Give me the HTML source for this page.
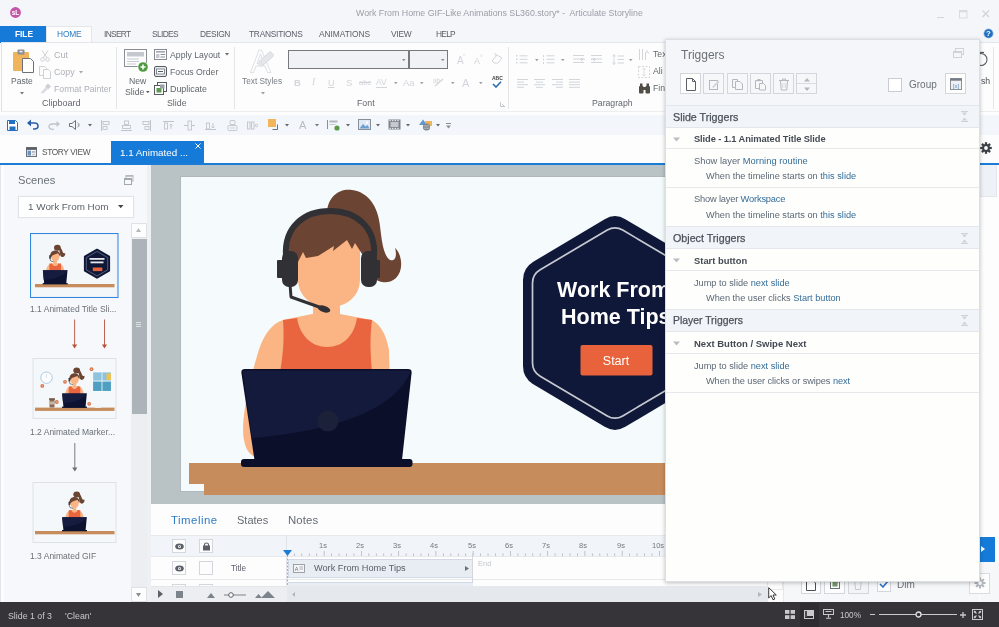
<!DOCTYPE html>
<html><head><meta charset="utf-8">
<style>
*{box-sizing:border-box;margin:0;padding:0}
html,body{width:999px;height:627px;overflow:hidden;background:#fdfdfd;font-family:"Liberation Sans",sans-serif;font-size:10px;color:#555}
.a{position:absolute}
svg{will-change:transform}
.t{position:absolute;white-space:nowrap;line-height:1;will-change:transform}
#titlebar{left:0;top:0;width:999px;height:43px;background:#f4f6fa}
#ribbon{left:1px;top:42px;width:998px;height:70px;background:#fdfdfd;border-top:1px solid #e3e6ea;border-left:1px solid #dfe2e6;border-bottom:1px solid #eceef0}
#qat{left:0;top:115px;width:999px;height:20px;background:#f3f6fb}
#tabrow{left:0;top:137px;width:999px;height:27px;background:#fdfdfd}
#blueline{left:0;top:163px;width:999px;height:1.5px;background:#1b7cd6}
#left{left:0;top:164.5px;width:151px;height:438px;background:#f6f8fb}
#stage{left:151px;top:164.5px;width:848px;height:340px;background:#b9c2c4}
#timeline{left:151px;top:504px;width:848px;height:99px;background:#fdfdfd}
#status{left:0;top:602px;width:999px;height:25px;background:#363439}
#rightstrip{left:979px;top:113px;width:20px;height:490px;background:#fdfdfd}
#trig{left:665px;top:39px;width:315px;height:542.5px;background:#fefefd;border:1px solid #dcdfe3;box-shadow:0 1px 4px rgba(0,0,0,.25)}
.hdr{position:absolute;left:0;width:313px;height:23px;background:#f1f4f9;border-top:1px solid #e3e6ea;border-bottom:1px solid #e3e6ea}
.hl{position:absolute;left:0;width:313px;height:1px;background:#e6e8eb}
.tx{color:#5c6875}
.lk{color:#336d99}
.bd{font-weight:bold;color:#444a52}
.tb{width:21px;height:21px;border:1px solid #d3d6da}
.rb{color:#62676e}
.rd{color:#adb1b7}
.lb{color:#62676e}
</style></head><body>
<div class="a" id="titlebar">
<svg class="a" style="left:9.5px;top:7px" width="11" height="11" viewBox="0 0 11 11"><circle cx="5.5" cy="5.5" r="5.4" fill="#c455a8"/><text x="5.5" y="8" font-size="6.5" font-weight="bold" fill="#fff" text-anchor="middle" font-family="Liberation Sans">sL</text></svg>
<div class="t " style="left:356px;top:9.3px;font-size:8.8px;color:#999ea5;">Work From Home GIF-Like Animations SL360.story* -&nbsp; Articulate Storyline</div>
<div class="a" style="left:0px;top:26px;width:46px;height:17px;background:#167bd8;"></div>
<div class="t " style="left:15px;top:30.3px;font-size:8.4px;color:#fff;letter-spacing:-0.039px;font-weight:700;">FILE</div>
<div class="a" style="left:46px;top:26px;width:46px;height:18px;background:#fdfdfd;border:1px solid #e3e6ea;border-bottom:none"></div>
<div class="t " style="left:57px;top:30.3px;font-size:8.4px;color:#2d7cc4;letter-spacing:-0.156px;">HOME</div>
<div class="t " style="left:103.5px;top:30.3px;font-size:8.4px;color:#5c6168;letter-spacing:-0.677px;">INSERT</div>
<div class="t " style="left:151.5px;top:30.3px;font-size:8.4px;color:#5c6168;letter-spacing:-0.633px;">SLIDES</div>
<div class="t " style="left:200px;top:30.3px;font-size:8.4px;color:#5c6168;letter-spacing:-0.354px;">DESIGN</div>
<div class="t " style="left:248.5px;top:30.3px;font-size:8.4px;color:#5c6168;letter-spacing:-0.256px;">TRANSITIONS</div>
<div class="t " style="left:318.5px;top:30.3px;font-size:8.4px;color:#5c6168;letter-spacing:-0.050px;">ANIMATIONS</div>
<div class="t " style="left:390.5px;top:30.3px;font-size:8.4px;color:#5c6168;letter-spacing:-0.227px;">VIEW</div>
<div class="t " style="left:436px;top:30.3px;font-size:8.4px;color:#5c6168;letter-spacing:-0.723px;">HELP</div>
<div class="a" style="left:937px;top:16.5px;width:7px;height:1px;background:#d3d6da;"></div>
<svg class="a" style="left:959px;top:9.5px" width="9" height="9" viewBox="0 0 9 9"><rect x=".5" y=".5" width="7.5" height="7.5" fill="none" stroke="#d8dbdf"/><rect x=".5" y=".5" width="7.5" height="1.8" fill="#d8dbdf"/></svg>
<svg class="a" style="left:982px;top:10px" width="8" height="8" viewBox="0 0 8 8"><path d="M.5 .5L7 7M7 .5L.5 7" stroke="#d0d3d7" stroke-width="1.1"/></svg>
<svg class="a" style="left:983px;top:28px" width="11" height="11" viewBox="0 0 11 11"><circle cx="5.5" cy="5.5" r="5.1" fill="#a9c6e6"/><circle cx="5.5" cy="5.5" r="4.3" fill="#1f6fc2"/><text x="5.5" y="8.3" font-size="7.8" font-weight="bold" fill="#fff" text-anchor="middle" font-family="Liberation Sans">?</text></svg>
</div>
<div class="a" id="ribbon"></div>
<svg class="a" style="left:12px;top:49px" width="23" height="24" viewBox="0 0 23 24"><rect x="1" y="3" width="16" height="19" rx="1" fill="#f0b45c"/><rect x="5.5" y="0.5" width="7" height="5" rx="1" fill="#8a8f96"/><rect x="7.5" y="1.8" width="3" height="1.6" fill="#f0f3f7"/><path d="M10.5 9.5H18.5L21.5 12.5V23.5H10.5Z" fill="#fff" stroke="#6b7179"/></svg>
<div class="t rb" style="left:10.8px;top:77.0px;font-size:8.5px;">Paste</div>
<svg class="a" style="left:20.0px;top:91.75px" width="4" height="2.5" viewBox="0 0 4 2.5"><path d="M0 0H4L2.0 2.5Z" fill="#777"/></svg>
<svg class="a" style="left:40px;top:49.5px" width="10" height="12" viewBox="0 0 10 12"><path d="M2 .5L7 8M8 .5L3 8" stroke="#cdd0d5" fill="none"/><circle cx="2.5" cy="9.5" r="1.8" fill="none" stroke="#cdd0d5"/><circle cx="7.5" cy="9.5" r="1.8" fill="none" stroke="#cdd0d5"/></svg>
<div class="t rd" style="left:54px;top:51.0px;font-size:9px;">Cut</div>
<svg class="a" style="left:39px;top:66px" width="12" height="13" viewBox="0 0 12 13"><path d="M.5 .5H5.5L7.5 2.5V9.5H.5Z" fill="#fdfdfd" stroke="#cdd0d5"/><path d="M4.5 3.5H9.5L11.5 5.5V12.5H4.5Z" fill="#fdfdfd" stroke="#cdd0d5"/></svg>
<div class="t rd" style="left:54px;top:68.4px;font-size:8.8px;">Copy</div>
<svg class="a" style="left:78.8px;top:71.05px" width="4" height="2.5" viewBox="0 0 4 2.5"><path d="M0 0H4L2.0 2.5Z" fill="#a3a8ae"/></svg>
<svg class="a" style="left:40px;top:83px" width="12" height="11" viewBox="0 0 12 11"><path d="M8 .5L11 3.5L8 6.5L5 3.5Z" fill="#cdd0d5"/><path d="M5.5 4.5L7.5 6.5L3 10.5L.5 10Z" fill="#d8dbdf"/></svg>
<div class="t rd" style="left:54px;top:84.7px;font-size:8.7px;">Format Painter</div>
<div class="t lb" style="left:41.5px;top:99.0px;font-size:9px;">Clipboard</div>
<div class="a" style="left:116px;top:47px;width:1px;height:62px;background:#e4e6ea;"></div>
<svg class="a" style="left:124px;top:48.5px" width="25" height="24" viewBox="0 0 25 24"><rect x=".5" y=".5" width="22" height="17" fill="#fdfdfd" stroke="#8a8f96"/><rect x="3" y="3" width="17" height="4.5" fill="#c5c9cf"/><rect x="3" y="9.5" width="12" height="1" fill="#c5c9cf"/><rect x="3" y="12" width="12" height="1" fill="#c5c9cf"/><rect x="3" y="14.5" width="9" height="1" fill="#c5c9cf"/><circle cx="19" cy="18" r="5.5" fill="#fdfdfd"/><circle cx="19" cy="18" r="4.8" fill="#4e9a3f"/><path d="M16.5 18H21.5M19 15.5V20.5" stroke="#fff" stroke-width="1.5"/></svg>
<div class="t rb" style="left:128.5px;top:76.8px;font-size:8.7px;">New</div>
<div class="t rb" style="left:125px;top:87.7px;font-size:8.7px;">Slide</div>
<svg class="a" style="left:145.7px;top:91.4px" width="3.6" height="2.2" viewBox="0 0 3.6 2.2"><path d="M0 0H3.6L1.8 2.2Z" fill="#555"/></svg>
<svg class="a" style="left:154px;top:48.5px" width="13" height="11" viewBox="0 0 13 11"><rect x=".5" y=".5" width="12" height="10" fill="#fdfdfd" stroke="#868b92"/><rect x="2" y="2" width="9" height="1.6" fill="#a3a8ae"/><rect x="2" y="5" width="3.5" height="4" fill="#c5c9cf"/><rect x="6.5" y="5" width="4.5" height="1" fill="#8a8f96"/><rect x="6.5" y="7.5" width="4.5" height="1" fill="#8a8f96"/></svg>
<div class="t rb" style="left:169.5px;top:50.6px;font-size:8.7px;">Apply Layout</div>
<svg class="a" style="left:225.2px;top:53.25px" width="4" height="2.5" viewBox="0 0 4 2.5"><path d="M0 0H4L2.0 2.5Z" fill="#666"/></svg>
<svg class="a" style="left:154px;top:66px" width="13" height="11" viewBox="0 0 13 11"><rect x=".5" y=".5" width="12" height="10" rx="1.5" fill="#e9ebee" stroke="#555b63"/><rect x="2.5" y="3" width="8" height="5" fill="#fdfdfd" stroke="#6b7179" stroke-width=".8"/><rect x="4" y="5" width="5" height="1" fill="#555b63"/></svg>
<div class="t rb" style="left:169.5px;top:68.2px;font-size:8.7px;">Focus Order</div>
<svg class="a" style="left:153.5px;top:82px" width="14" height="13" viewBox="0 0 14 13"><rect x="3.5" y=".5" width="9" height="9" fill="#fdfdfd" stroke="#555b63"/><rect x=".5" y="3.5" width="9" height="9" fill="#fdfdfd" stroke="#555b63"/><rect x="2.5" y="6" width="5" height="4.5" fill="#5d9a4c"/><rect x="6" y="2.5" width="4.5" height="4" fill="#9aa0a7"/></svg>
<div class="t rb" style="left:169.5px;top:84.5px;font-size:8.9px;">Duplicate</div>
<div class="t lb" style="left:167.2px;top:99.1px;font-size:8.8px;">Slide</div>
<div class="a" style="left:233.5px;top:47px;width:1px;height:62px;background:#e4e6ea;"></div>
<svg class="a" style="left:249px;top:49px" width="26" height="25" viewBox="0 0 26 25"><path d="M1.5 23.5L10 1H12.5L22 23.5H18.5L16 17H7L4.5 23.5Z" fill="#fdfdfd" stroke="#d9dce0" stroke-width=".9"/><path d="M8 14.5H15L11.5 5Z" fill="#fdfdfd" stroke="#d9dce0" stroke-width=".9"/><g transform="rotate(-41 18 9)"><rect x="10" y="6.2" width="15" height="5.6" rx="1.5" fill="#e4e6ea" stroke="#d3d6da" stroke-width=".8"/><path d="M10 6.2L7 9L10 11.8Z" fill="#eceef0" stroke="#d3d6da" stroke-width=".6"/></g></svg>
<div class="t " style="left:241.5px;top:77.1px;font-size:8.3px;color:#7a7f86;">Text Styles</div>
<svg class="a" style="left:260.5px;top:91.75px" width="4" height="2.5" viewBox="0 0 4 2.5"><path d="M0 0H4L2.0 2.5Z" fill="#9a9fa6"/></svg>
<div class="a" style="left:288px;top:50px;width:121px;height:19px;background:#f1f2f5;border:1px solid #77797d"></div>
<div class="a" style="left:408.5px;top:50px;width:39px;height:19px;background:#f1f2f5;border:1px solid #77797d"></div>
<svg class="a" style="left:401.7px;top:58.9px" width="3.6" height="2.2" viewBox="0 0 3.6 2.2"><path d="M0 0H3.6L1.8 2.2Z" fill="#8a8f96"/></svg>
<svg class="a" style="left:440.5px;top:58.9px" width="3.6" height="2.2" viewBox="0 0 3.6 2.2"><path d="M0 0H3.6L1.8 2.2Z" fill="#8a8f96"/></svg>
<div class="t " style="left:457px;top:56.0px;font-size:10px;color:#d2d5da;">A</div>
<div class="t " style="left:463px;top:54.0px;font-size:5px;color:#d2d5da;">^</div>
<div class="t " style="left:473.5px;top:57.0px;font-size:9px;color:#d2d5da;">A</div>
<div class="t " style="left:479.5px;top:54.0px;font-size:5px;color:#d2d5da;">˅</div>
<svg class="a" style="left:491px;top:53px" width="12" height="11" viewBox="0 0 12 11"><path d="M1 8L6 2L11 5L7 10H3Z" fill="none" stroke="#d2d5da"/><path d="M3 1C5 0 6 2 4 3" stroke="#d2d5da" fill="none"/></svg>
<div class="t " style="left:293.5px;top:78.3px;font-size:9.5px;color:#d2d5da;font-weight:bold">B</div>
<div class="t " style="left:312px;top:78.3px;font-size:9.5px;color:#d2d5da;font-style:italic;font-family:'Liberation Serif'">I</div>
<div class="t " style="left:327.5px;top:78.6px;font-size:9px;color:#d2d5da;text-decoration:underline">U</div>
<div class="t " style="left:345.5px;top:78.3px;font-size:9.5px;color:#d2d5da;">S</div>
<div class="t " style="left:358.5px;top:79.3px;font-size:7.5px;color:#d2d5da;text-decoration:line-through">abc</div>
<div class="t " style="left:376px;top:77.8px;font-size:8.5px;color:#d2d5da;">AV</div>
<div class="a" style="left:376px;top:86.5px;width:11px;height:1px;background:#d2d5da;"></div>
<svg class="a" style="left:393.9px;top:81.5px" width="3.6" height="2.2" viewBox="0 0 3.6 2.2"><path d="M0 0H3.6L1.8 2.2Z" fill="#9a9fa6"/></svg>
<div class="t " style="left:402.5px;top:78.3px;font-size:9.5px;color:#d2d5da;">Aa</div>
<svg class="a" style="left:420.4px;top:81.5px" width="3.6" height="2.2" viewBox="0 0 3.6 2.2"><path d="M0 0H3.6L1.8 2.2Z" fill="#9a9fa6"/></svg>
<div class="t " style="left:433px;top:77.8px;font-size:6.5px;color:#d2d5da;">ab</div>
<svg class="a" style="left:434px;top:78px" width="10" height="9" viewBox="0 0 10 9"><path d="M1 8L9 1" stroke="#d2d5da" stroke-width="1.3"/></svg>
<svg class="a" style="left:450.9px;top:81.5px" width="3.6" height="2.2" viewBox="0 0 3.6 2.2"><path d="M0 0H3.6L1.8 2.2Z" fill="#9a9fa6"/></svg>
<div class="t " style="left:462px;top:77.6px;font-size:11px;color:#d2d5da;">A</div>
<svg class="a" style="left:478.5px;top:81.5px" width="3.6" height="2.2" viewBox="0 0 3.6 2.2"><path d="M0 0H3.6L1.8 2.2Z" fill="#9a9fa6"/></svg>
<div class="t " style="left:492px;top:76.3px;font-size:5px;color:#444;font-weight:bold">ABC</div>
<svg class="a" style="left:492px;top:81px" width="10" height="7" viewBox="0 0 10 7"><path d="M1 3L4 6L9 .8" fill="none" stroke="#2b6cb0" stroke-width="1.6"/></svg>
<div class="t lb" style="left:357.3px;top:99.1px;font-size:8.8px;">Font</div>
<svg class="a" style="left:499.5px;top:102px" width="5" height="5" viewBox="0 0 5 5"><path d="M.5 0V4.5H5M2 2L4.5 4.5" fill="none" stroke="#b8bcc2" stroke-width=".8"/></svg>
<div class="a" style="left:508px;top:47px;width:1px;height:62px;background:#e4e6ea;"></div>
<svg class="a" style="left:516px;top:54.5px" width="12" height="9" viewBox="0 0 12 9"><rect x="0" y="0.0" width="1.5" height="1.5" fill="#d2d5da"/><rect x="3.5" y="0.3" width="8" height="1" fill="#d2d5da"/><rect x="0" y="3.5" width="1.5" height="1.5" fill="#d2d5da"/><rect x="3.5" y="3.8" width="8" height="1" fill="#d2d5da"/><rect x="0" y="7.0" width="1.5" height="1.5" fill="#d2d5da"/><rect x="3.5" y="7.3" width="8" height="1" fill="#d2d5da"/></svg>
<svg class="a" style="left:534.5px;top:58.9px" width="3.6" height="2.2" viewBox="0 0 3.6 2.2"><path d="M0 0H3.6L1.8 2.2Z" fill="#9a9fa6"/></svg>
<svg class="a" style="left:543px;top:54.5px" width="12" height="9" viewBox="0 0 12 9"><rect x="0" y="0.0" width="1" height="2" fill="#d2d5da"/><rect x="3.5" y="0.3" width="8" height="1" fill="#d2d5da"/><rect x="0" y="3.5" width="1" height="2" fill="#d2d5da"/><rect x="3.5" y="3.8" width="8" height="1" fill="#d2d5da"/><rect x="0" y="7.0" width="1" height="2" fill="#d2d5da"/><rect x="3.5" y="7.3" width="8" height="1" fill="#d2d5da"/></svg>
<svg class="a" style="left:560.8000000000001px;top:58.9px" width="3.6" height="2.2" viewBox="0 0 3.6 2.2"><path d="M0 0H3.6L1.8 2.2Z" fill="#9a9fa6"/></svg>
<svg class="a" style="left:573px;top:55px" width="11" height="10.5" viewBox="0 0 11 10.5"><rect x="0" y="0.0" width="11" height="1" fill="#d2d5da"/><rect x="0" y="3.5" width="11" height="1" fill="#d2d5da"/><rect x="0" y="7.0" width="11" height="1" fill="#d2d5da"/></svg>
<svg class="a" style="left:580px;top:56.5px" width="5" height="5" viewBox="0 0 5 5"><path d="M5 2.5H1M2.5 .5L.5 2.5L2.5 4.5" stroke="#d2d5da" fill="none"/></svg>
<svg class="a" style="left:591px;top:55px" width="11" height="10.5" viewBox="0 0 11 10.5"><rect x="0" y="0.0" width="11" height="1" fill="#d2d5da"/><rect x="0" y="3.5" width="11" height="1" fill="#d2d5da"/><rect x="0" y="7.0" width="11" height="1" fill="#d2d5da"/></svg>
<svg class="a" style="left:591px;top:56.5px" width="5" height="5" viewBox="0 0 5 5"><path d="M0 2.5H4M2.5 .5L4.5 2.5L2.5 4.5" stroke="#d2d5da" fill="none"/></svg>
<svg class="a" style="left:612px;top:53.5px" width="12" height="11" viewBox="0 0 12 11"><path d="M2 .5V10.5M.5 2.5L2 .5L3.5 2.5M.5 8.5L2 10.5L3.5 8.5" stroke="#d2d5da" fill="none" stroke-width=".9"/><rect x="5.5" y="1.5" width="6.5" height="1" fill="#d2d5da"/><rect x="5.5" y="5.0" width="6.5" height="1" fill="#d2d5da"/><rect x="5.5" y="8.5" width="6.5" height="1" fill="#d2d5da"/></svg>
<svg class="a" style="left:629.2px;top:58.9px" width="3.6" height="2.2" viewBox="0 0 3.6 2.2"><path d="M0 0H3.6L1.8 2.2Z" fill="#9a9fa6"/></svg>
<svg class="a" style="left:517px;top:79px" width="11" height="10" viewBox="0 0 11 10"><rect x="0" y="0.0" width="11" height="1" fill="#d2d5da"/><rect x="0" y="2.6" width="7" height="1" fill="#d2d5da"/><rect x="0" y="5.2" width="11" height="1" fill="#d2d5da"/><rect x="0" y="7.800000000000001" width="7" height="1" fill="#d2d5da"/></svg>
<svg class="a" style="left:534px;top:79px" width="11" height="10" viewBox="0 0 11 10"><rect x="0.0" y="0.0" width="11" height="1" fill="#d2d5da"/><rect x="2.0" y="2.6" width="7" height="1" fill="#d2d5da"/><rect x="0.0" y="5.2" width="11" height="1" fill="#d2d5da"/><rect x="2.0" y="7.800000000000001" width="7" height="1" fill="#d2d5da"/></svg>
<svg class="a" style="left:551.5px;top:79px" width="11" height="10" viewBox="0 0 11 10"><rect x="0" y="0.0" width="11" height="1" fill="#d2d5da"/><rect x="4" y="2.6" width="7" height="1" fill="#d2d5da"/><rect x="0" y="5.2" width="11" height="1" fill="#d2d5da"/><rect x="4" y="7.800000000000001" width="7" height="1" fill="#d2d5da"/></svg>
<svg class="a" style="left:568.5px;top:79px" width="11" height="10" viewBox="0 0 11 10"><rect x="0" y="0.0" width="11" height="1" fill="#d2d5da"/><rect x="0" y="2.6" width="11" height="1" fill="#d2d5da"/><rect x="0" y="5.2" width="11" height="1" fill="#d2d5da"/><rect x="0" y="7.800000000000001" width="11" height="1" fill="#d2d5da"/></svg>
<div class="t lb" style="left:592px;top:99.2px;font-size:8.7px;">Paragraph</div>
<svg class="a" style="left:638px;top:48.5px" width="12" height="12" viewBox="0 0 12 12"><path d="M1.5 0V11M4.5 0V11M7.5 3V11" stroke="#d2d5da"/><text x="7" y="5" font-size="6" fill="#d2d5da" font-family="Liberation Sans">A</text></svg>
<div class="t rb" style="left:652.8px;top:50.2px;font-size:8.7px;">Tex</div>
<svg class="a" style="left:638px;top:65.5px" width="12" height="12" viewBox="0 0 12 12"><rect x=".5" y=".5" width="11" height="11" fill="none" stroke="#d2d5da" stroke-dasharray="2 1.5"/><path d="M6 2V10M4.5 3.5L6 2L7.5 3.5M4.5 8.5L6 10L7.5 8.5" stroke="#d2d5da" fill="none" stroke-width=".8"/></svg>
<div class="t rb" style="left:652.8px;top:67.4px;font-size:8.7px;">Ali</div>
<svg class="a" style="left:638px;top:82.5px" width="13" height="11" viewBox="0 0 13 11"><rect x="1" y="3" width="4.5" height="7.5" rx="1" fill="#504e46"/><rect x="7.5" y="3" width="4.5" height="7.5" rx="1" fill="#504e46"/><rect x="2" y=".5" width="2.5" height="3" fill="#504e46"/><rect x="8.5" y=".5" width="2.5" height="3" fill="#504e46"/><rect x="5" y="4" width="3" height="3" fill="#504e46"/></svg>
<div class="t rb" style="left:652.8px;top:84.2px;font-size:8.7px;">Fin</div>
<div class="a" id="qat"></div>
<svg class="a" style="left:6.5px;top:119.5px" width="11" height="11" viewBox="0 0 11 11"><path d="M.5 .5H8.5L10.5 2.5V10.5H.5Z" fill="#fff" stroke="#2470c0"/><rect x="2" y=".5" width="6" height="3.5" fill="#2470c0"/><rect x="2.5" y="6.5" width="6" height="4" fill="#2470c0"/></svg>
<svg class="a" style="left:27px;top:119px" width="12" height="11" viewBox="0 0 12 11"><path d="M2 4H7.5C10 4 11 5.5 11 7C11 8.8 9.5 10 7.5 10H6" fill="none" stroke="#2b5ea8" stroke-width="1.6"/><path d="M0 4L4 .5V7.5Z" fill="#2b5ea8"/></svg>
<svg class="a" style="left:48px;top:119.5px" width="12" height="10" viewBox="0 0 12 10"><path d="M10 4H4.5C2 4 1 5.2 1 6.6C1 8.2 2.5 9.3 4.5 9.3H6" fill="none" stroke="#c0c5cb" stroke-width="1.3"/><path d="M12 4L8.5 1V7Z" fill="#c0c5cb"/></svg>
<svg class="a" style="left:69px;top:120px" width="12" height="10" viewBox="0 0 12 10"><path d="M.5 3.5H3L6.5 .5V9.5L3 6.5H.5Z" fill="none" stroke="#6b7179"/><path d="M8.5 2.5C9.8 4 9.8 6 8.5 7.5M10 3.5V6.5" fill="none" stroke="#9a9fa6" stroke-width=".9"/></svg>
<svg class="a" style="left:87.6px;top:123.75px" width="4" height="2.5" viewBox="0 0 4 2.5"><path d="M0 0H4L2.0 2.5Z" fill="#666"/></svg>
<svg class="a" style="left:99.5px;top:119.5px" width="11" height="11" viewBox="0 0 11 11"><path d="M1.5 0V11" stroke="#c0c5cb"/><rect x="3" y="1.5" width="6" height="3" fill="none" stroke="#c0c5cb" stroke-width=".9"/><rect x="3" y="6.5" width="4" height="3" fill="none" stroke="#c0c5cb" stroke-width=".9"/></svg>
<svg class="a" style="left:120.5px;top:119.5px" width="11" height="11" viewBox="0 0 11 11"><path d="M0 10.5H11" stroke="#c0c5cb"/><rect x="3.5" y="1" width="4" height="3.5" fill="none" stroke="#c0c5cb" stroke-width=".9"/><rect x="1.5" y="5.5" width="8" height="3" fill="none" stroke="#c0c5cb" stroke-width=".9"/></svg>
<svg class="a" style="left:141.0px;top:119.5px" width="11" height="11" viewBox="0 0 11 11"><path d="M9.5 0V11" stroke="#c0c5cb"/><rect x="2" y="1.5" width="6" height="3" fill="none" stroke="#c0c5cb" stroke-width=".9"/><rect x="4" y="6.5" width="4" height="3" fill="none" stroke="#c0c5cb" stroke-width=".9"/></svg>
<svg class="a" style="left:162.5px;top:119.5px" width="11" height="11" viewBox="0 0 11 11"><path d="M0 1.5H11" stroke="#c0c5cb"/><rect x="1.5" y="3" width="3" height="6" fill="none" stroke="#c0c5cb" stroke-width=".9"/><path d="M8 9V4M6.5 5.5L8 4L9.5 5.5" fill="none" stroke="#c0c5cb" stroke-width=".9"/></svg>
<svg class="a" style="left:184.0px;top:119.5px" width="11" height="11" viewBox="0 0 11 11"><path d="M0 5.5H11" stroke="#c0c5cb"/><rect x="4" y="1" width="3.5" height="9" fill="#f2f4f9" stroke="#c0c5cb" stroke-width=".9"/></svg>
<svg class="a" style="left:204.5px;top:119.5px" width="11" height="11" viewBox="0 0 11 11"><path d="M0 9.5H11" stroke="#c0c5cb"/><rect x="1.5" y="3" width="3" height="6" fill="none" stroke="#c0c5cb" stroke-width=".9"/><path d="M8 3V8M6.5 6.5L8 8L9.5 6.5" fill="none" stroke="#c0c5cb" stroke-width=".9"/></svg>
<svg class="a" style="left:226.5px;top:119.5px" width="11" height="11" viewBox="0 0 11 11"><rect x="3" y=".5" width="5" height="4" rx="1" fill="none" stroke="#c0c5cb" stroke-width=".9"/><rect x="1" y="5.5" width="9" height="5" rx="1" fill="none" stroke="#c0c5cb" stroke-width=".9"/><path d="M3 8H8" stroke="#c0c5cb" stroke-width=".8"/></svg>
<svg class="a" style="left:246.5px;top:119.5px" width="11" height="11" viewBox="0 0 11 11"><rect x=".5" y="2" width="2.5" height="7" fill="none" stroke="#c0c5cb" stroke-width=".9"/><rect x="4.5" y="2" width="2.5" height="7" fill="none" stroke="#c0c5cb" stroke-width=".9"/><circle cx="9.5" cy="5.5" r="1.3" fill="none" stroke="#c0c5cb" stroke-width=".9"/></svg>
<svg class="a" style="left:267.5px;top:119px" width="12" height="12" viewBox="0 0 12 12"><rect x="0" y="0" width="8" height="8" fill="#f4b45a"/><path d="M9.5 5.5V10.5H4.5" fill="none" stroke="#6b7179" stroke-width="1"/></svg>
<svg class="a" style="left:285.3px;top:123.75px" width="4" height="2.5" viewBox="0 0 4 2.5"><path d="M0 0H4L2.0 2.5Z" fill="#666"/></svg>
<div class="t " style="left:299px;top:120.0px;font-size:11px;color:#b8bcc2;">A</div>
<svg class="a" style="left:315.3px;top:123.75px" width="4" height="2.5" viewBox="0 0 4 2.5"><path d="M0 0H4L2.0 2.5Z" fill="#777"/></svg>
<svg class="a" style="left:327px;top:119.5px" width="13" height="11" viewBox="0 0 13 11"><path d="M.5 0V9" stroke="#8a8f96"/><rect x="2.5" y=".5" width="8" height="2" fill="#b3b8be"/><rect x="2.5" y="4" width="6" height="1" fill="#c5c9cf"/><circle cx="10" cy="8" r="2.6" fill="#5a9a48"/></svg>
<svg class="a" style="left:345.6px;top:123.75px" width="4" height="2.5" viewBox="0 0 4 2.5"><path d="M0 0H4L2.0 2.5Z" fill="#666"/></svg>
<svg class="a" style="left:357.5px;top:118.5px" width="13" height="12" viewBox="0 0 13 12"><rect x=".5" y=".5" width="12" height="10" fill="#dfe9f5" stroke="#8a8f96"/><path d="M1.5 9.5L5 5L7.5 7.5L9.5 6L11.5 9.5Z" fill="#6b9ed2"/><circle cx="9" cy="3.5" r="1.2" fill="#fff"/></svg>
<svg class="a" style="left:376.1px;top:123.75px" width="4" height="2.5" viewBox="0 0 4 2.5"><path d="M0 0H4L2.0 2.5Z" fill="#666"/></svg>
<svg class="a" style="left:387.5px;top:119px" width="13" height="11" viewBox="0 0 13 11"><rect x=".5" y=".5" width="12" height="10" fill="#7d838b"/><rect x="2.5" y="3" width="8" height="5" fill="#c5c9cf"/><rect x="1.5" y="1" width="1.4" height="1.2" fill="#e9ebee"/><rect x="1.5" y="8.8" width="1.4" height="1.2" fill="#e9ebee"/><rect x="4.1" y="1" width="1.4" height="1.2" fill="#e9ebee"/><rect x="4.1" y="8.8" width="1.4" height="1.2" fill="#e9ebee"/><rect x="6.7" y="1" width="1.4" height="1.2" fill="#e9ebee"/><rect x="6.7" y="8.8" width="1.4" height="1.2" fill="#e9ebee"/><rect x="9.3" y="1" width="1.4" height="1.2" fill="#e9ebee"/><rect x="9.3" y="8.8" width="1.4" height="1.2" fill="#e9ebee"/></svg>
<svg class="a" style="left:406.2px;top:123.75px" width="4" height="2.5" viewBox="0 0 4 2.5"><path d="M0 0H4L2.0 2.5Z" fill="#666"/></svg>
<svg class="a" style="left:418.5px;top:118.5px" width="14" height="13" viewBox="0 0 14 13"><path d="M4 .5L8 6H0Z" fill="#5f97cf"/><rect x="6" y="2" width="7" height="5" fill="#f0b45c"/><circle cx="7.5" cy="8" r="3.6" fill="#7d838b"/><path d="M4.5 8H10.5M5 6.5H10M5 9.5H10" stroke="#c5c9cf" stroke-width=".6"/></svg>
<svg class="a" style="left:436.4px;top:123.75px" width="4" height="2.5" viewBox="0 0 4 2.5"><path d="M0 0H4L2.0 2.5Z" fill="#666"/></svg>
<svg class="a" style="left:445.5px;top:122.5px" width="5" height="6" viewBox="0 0 5 6"><path d="M0 .5H5" stroke="#8a8f96"/><path d="M0 2.5H5L2.5 5.5Z" fill="#8a8f96"/></svg>
<div class="a" id="tabrow"></div>
<svg class="a" style="left:25.5px;top:146.5px" width="11" height="10" viewBox="0 0 11 10"><rect x=".5" y=".5" width="10" height="9" fill="#fdfdfd" stroke="#6b7179"/><rect x=".5" y=".5" width="10" height="2.4" fill="#5b6068"/><rect x="1.5" y="3.6" width="3.6" height="5" fill="#6f93bd"/><rect x="6" y="4" width="3.5" height="1.8" fill="#b3b8be"/><rect x="6" y="6.6" width="3.5" height="1.8" fill="#c5c9cf"/></svg>
<div class="t " style="left:42px;top:148.3px;font-size:8.3px;color:#555;letter-spacing:-.35px">STORY VIEW</div>
<div class="a" style="left:111px;top:141px;width:93px;height:22.5px;background:#167bd8;"></div>
<div class="t " style="left:119.5px;top:147.9px;font-size:9.8px;color:#fff;">1.1 Animated ...</div>
<svg class="a" style="left:195.3px;top:143px" width="6" height="6" viewBox="0 0 6 6"><path d="M.5 .5L5.5 5.5M5.5 .5L.5 5.5" stroke="#fff" stroke-width="1"/></svg>
<div class="a" id="blueline"></div>
<div class="a" id="stage"></div>
<!-- SLIDE ART -->
<svg class="a" id="art" style="left:0;top:0" width="999" height="627" viewBox="0 0 999 627">
 <rect x="180" y="176" width="520" height="316" fill="#a9b0b5" opacity=".55"/>
 <rect x="181" y="177" width="520" height="314" fill="#f5fbfc"/>
 <!-- desk -->
 <rect x="189" y="463" width="520" height="21" fill="#c68c5c"/>
 <rect x="204" y="484" width="520" height="11" fill="#c68c5c"/>
 <!-- ponytail -->
 <path d="M327 212 C328 196 340 188 352 190 C368 192 378 206 380 226 C382 244 384 256 390 260 C396 262 397 254 395 248 C402 254 404 270 396 278 C390 284 378 284 372 276 L366 230 Z" fill="#6b4433"/>
 <!-- arms/shoulders skin -->
 <path d="M283 320 C270 324 262 338 257 356 C250 380 240 420 244 440 C246 452 252 458 262 458 L392 458 L389 350 C386 334 380 324 372 320 L340 314 L312 314 Z" fill="#fbb584"/>
 <!-- neck -->
 <rect x="313" y="290" width="27" height="40" fill="#fbb584"/>
 <!-- tank top -->
 <path d="M283 320 L297 318 C300 336 312 347 327 347 C343 347 354 336 357 318 L372 320 C370 335 370 350 372 372 L280 372 C284 350 284 335 283 320 Z" fill="#e8653f"/>
 <!-- face -->
 <path d="M298 232 L360 232 L360 279 C360 297 346 307 329 307 C312 307 298 297 298 279 Z" fill="#fbb584"/>
 <!-- hair -->
 <path d="M289 256 C286 229 304 212 330 212 C356 212 374 229 371 256 L362 254 L355 243 L352 249 L347 240 L333 251 L334 246 L318 256 L306 258 L303 252 L298 262 Z" fill="#6b4433"/>
 <!-- headband -->
 <path d="M286 256 C284 227 304 211 330 211 C356 211 376 227 374 256" fill="none" stroke="#313035" stroke-width="6"/>
 <!-- ear cups -->
 <rect x="282" y="251" width="16" height="36" rx="7" fill="#313035"/>
 <rect x="277" y="260" width="8" height="18" rx="1" fill="#313035"/>
 <rect x="361" y="251" width="16" height="36" rx="7" fill="#313035"/>
 <rect x="373" y="260" width="7" height="18" rx="1" fill="#313035"/>
 <!-- mic -->
 <path d="M290 284 L291 297 L322 308" fill="none" stroke="#313035" stroke-width="3" stroke-linejoin="round"/>
 <ellipse cx="324" cy="309" rx="6.5" ry="3.2" transform="rotate(18 324 309)" fill="#313035"/>
 <!-- laptop -->
 <path d="M245 369 L408 369 Q412 369 411.6 373 L402 460 L254.5 460 L241.4 373 Q241 369 245 369 Z" fill="#0b0f29"/>
 <path d="M245 370.5 L408 370.5 Q410.5 370.5 410 373 C398 402 352 430 252 438 L243 373 Q242.6 370.5 245 370.5 Z" fill="#131a3c"/>
 <circle cx="328" cy="421" r="10.5" fill="#1b2138"/>
 <rect x="241" y="459" width="171.5" height="8" rx="3" fill="#0b0f29"/>
 <!-- hexagon -->
 <path d="M604.7 219.2 Q615.0 213.0 625.3 219.2 L696.7 261.8 Q707.0 268.0 707.0 280.0 L707.0 366.0 Q707.0 378.0 696.7 384.2 L625.3 426.8 Q615.0 433.0 604.7 426.8 L533.3 384.2 Q523.0 378.0 523.0 366.0 L523.0 280.0 Q523.0 268.0 533.3 261.8 Z" fill="#10183a"/>
 <path d="M607.3 230.1 Q615.0 225.5 622.7 230.1 L689.8 269.7 Q697.5 274.2 697.5 283.2 L697.5 362.8 Q697.5 371.8 689.8 376.3 L622.7 415.9 Q615.0 420.5 607.3 415.9 L540.2 376.3 Q532.5 371.8 532.5 362.8 L532.5 283.2 Q532.5 274.2 540.2 269.7 Z" fill="none" stroke="#c6cad0" stroke-width="1.7"/>
 <text x="557" y="297" font-family="Liberation Sans" font-weight="bold" font-size="21.5" fill="#fff">Work From</text>
 <text x="561" y="324" font-family="Liberation Sans" font-weight="bold" font-size="21.5" fill="#fff">Home Tips</text>
 <rect x="580.5" y="345" width="72" height="30.5" rx="2" fill="#e8633b"/>
 <text x="616" y="364.5" font-family="Liberation Sans" font-size="12.5" fill="#fff" text-anchor="middle">Start</text>
</svg>
<div class="a" id="left"></div>
<div class="a" style="left:0px;top:164.5px;width:1px;height:438px;background:#e4e5e9;"></div>
<div class="a" style="left:1px;top:164.5px;width:3px;height:438px;background:#fdfdfd;"></div>
<div class="a" style="left:146.5px;top:164.5px;width:4.5px;height:438px;background:#eef0f3;"></div>
<div class="t " style="left:18px;top:174.9px;font-size:11.2px;color:#6b7179;">Scenes</div>
<svg class="a" style="left:124px;top:174.5px" width="10" height="11" viewBox="0 0 10 11"><rect x="2" y=".5" width="7" height="5.5" fill="none" stroke="#b3b8be"/><rect x="2" y=".5" width="7" height="1.3" fill="#b3b8be"/><rect x=".5" y="3.5" width="7" height="6" fill="#f6f8fb" stroke="#a3a8ae"/><rect x=".5" y="3.5" width="7" height="1.5" fill="#a3a8ae"/></svg>
<div class="a" style="left:18px;top:195.5px;width:115.5px;height:22px;background:#fff;border:1px solid #e0e3e7;box-shadow:0 0 1px rgba(0,0,0,.08)"></div>
<div class="t" style="left:28px;top:201.7px;font-size:9.9px;color:#5b6068;width:81px;overflow:hidden">1 Work From Home</div>
<svg class="a" style="left:118.25px;top:205.4px" width="5.5" height="3.2" viewBox="0 0 5.5 3.2"><path d="M0 0H5.5L2.75 3.2Z" fill="#444"/></svg>
<div class="a" style="left:131px;top:223px;width:15.5px;height:379px;background:#eceef1;"></div>
<div class="a" style="left:131px;top:223px;width:15.5px;height:15px;background:#fdfdfd;border:1px solid #dfe2e5"></div>
<svg class="a" style="left:136px;top:228px" width="5" height="4" viewBox="0 0 5 4"><path d="M2.5 0L5 4H0Z" fill="#b3b8be"/></svg>
<div class="a" style="left:131.5px;top:238.5px;width:15px;height:175px;background:#adb4b9;"></div>
<svg class="a" style="left:136px;top:322px" width="5" height="6" viewBox="0 0 5 6"><path d="M0 .5H5M0 2.5H5M0 4.5H5" stroke="#e9ebee" stroke-width=".8"/></svg>
<div class="a" style="left:131px;top:587px;width:15.5px;height:15px;background:#fdfdfd;border:1px solid #dfe2e5"></div>
<svg class="a" style="left:136px;top:592.5px" width="5" height="4" viewBox="0 0 5 4"><path d="M0 0H5L2.5 4Z" fill="#8a8f96"/></svg>
<svg class="a" style="left:0px;top:0px" width="152" height="627" viewBox="0 0 152 627"><rect x="30.5" y="233.5" width="87.5" height="64" fill="#e9f0f8" stroke="#2f86dc" stroke-width="1"/><rect x="32" y="235" width="84.5" height="61" fill="#f4f7f9"/><rect x="35" y="284" width="79.5" height="3.3" fill="#c68c5c"/><ellipse cx="57.400000000000006" cy="247.8" rx="3.4" ry="3" fill="#6b4433"/><path d="M58.7 247C63.2 248 61.7 254.5 65.2 253C65.7 257.5 61.2 258.5 60.2 255Z" fill="#6b4433"/><path d="M45.7 276.2C45.7 265 48.7 263.3 55.2 263.3C61.7 263.3 64.7 265 64.7 276.2Z" fill="#fbb584"/><path d="M49.400000000000006 263.6L52.2 263.4C52.7 267 57.7 267 58.2 263.4L61.0 263.6V272.2H49.400000000000006Z" fill="#e8653f"/><rect x="53.5" y="259.5" width="3.4" height="5.5" fill="#fbb584"/><ellipse cx="55.2" cy="256.3" rx="4.3" ry="5.3" fill="#fbb584"/><path d="M50.2 256.5C49.400000000000006 248.5 61.0 248.5 60.2 256.5L58.0 253.2L52.7 255.2L51.2 257Z" fill="#6b4433"/><rect x="49.2" y="255" width="1.7" height="4" rx=".8" fill="#3a3a3f"/><path d="M50.0 259L50.7 261L53.7 261.8" fill="none" stroke="#3a3a3f" stroke-width=".6"/><path d="M42.900000000000006 270.2H67.5L66.2 284.1H44.2Z" fill="#0d1230"/><path d="M42.900000000000006 270.2H67.5C64.2 276.2 55.2 279.2 43.7 279.7Z" fill="#161c40"/><rect x="42.7" y="283.1" width="25" height="1.3" fill="#0d1230"/><polygon points="97.0,249.7 109.1,256.7 109.1,270.7 97.0,277.7 84.9,270.7 84.9,256.7" fill="#10183a" stroke="#10183a" stroke-width="2" stroke-linejoin="round"/><polygon points="97.0,251.4 107.7,257.6 107.7,269.8 97.0,276.0 86.3,269.8 86.3,257.6" fill="none" stroke="#9aa0ab" stroke-width=".5"/><rect x="89.5" y="258" width="15" height="1.8" fill="#e8e8ec"/><rect x="90.5" y="261.5" width="13" height="1.8" fill="#e8e8ec"/><rect x="92.8" y="267.5" width="9.5" height="3.6" fill="#e8633b"/><path d="M74.6 319.5V346" stroke="#b5543c" stroke-width=".9"/><path d="M72.0 344.5H77.19999999999999L74.6 348.5Z" fill="#b5543c"/><path d="M104.5 319.5V346" stroke="#b5543c" stroke-width=".9"/><path d="M101.9 344.5H107.1L104.5 348.5Z" fill="#b5543c"/><rect x="33" y="358.5" width="83" height="60" fill="#f5f8fa" stroke="#dfe2e5"/><rect x="35" y="407.6" width="79.5" height="3.3" fill="#c68c5c"/><ellipse cx="76.7" cy="370.6" rx="3.4" ry="3" fill="#6b4433"/><path d="M78.0 369.8C82.5 370.8 81.0 377.3 84.5 375.8C85.0 380.3 80.5 381.3 79.5 377.8Z" fill="#6b4433"/><path d="M65.0 399.6C65.0 387.8 68.0 386.1 74.5 386.1C81.0 386.1 84.0 387.8 84.0 399.6Z" fill="#fbb584"/><path d="M68.7 386.40000000000003L71.5 386.2C72.0 389.8 77.0 389.8 77.5 386.2L80.3 386.40000000000003V395.6H68.7Z" fill="#e8653f"/><rect x="72.8" y="382.3" width="3.4" height="5.5" fill="#fbb584"/><ellipse cx="74.5" cy="379.1" rx="4.3" ry="5.3" fill="#fbb584"/><path d="M69.5 379.3C68.7 371.3 80.3 371.3 79.5 379.3L77.3 376.0L72.0 378.0L70.5 379.8Z" fill="#6b4433"/><rect x="68.5" y="377.8" width="1.7" height="4" rx=".8" fill="#3a3a3f"/><path d="M69.3 381.8L70.0 383.8L73.0 384.6" fill="none" stroke="#3a3a3f" stroke-width=".6"/><path d="M62.2 393.6H86.8L85.5 407.6H63.5Z" fill="#0d1230"/><path d="M62.2 393.6H86.8C83.5 399.6 74.5 402.6 63.0 403.1Z" fill="#161c40"/><rect x="62.0" y="406.6" width="25" height="1.3" fill="#0d1230"/><circle cx="46.5" cy="377.7" r="5.7" fill="#fdfdfd" stroke="#a9cbe8" stroke-width="1"/><path d="M46.5 374V378" stroke="#c5d9ea" stroke-width=".7" fill="none"/><rect x="93.2" y="372.4" width="17.7" height="18.5" fill="#8dc3dc"/><rect x="106.5" y="373.5" width="4.4" height="6.5" fill="#f2c14e"/><rect x="93.2" y="381.5" width="17.7" height="9.4" fill="#4f9fc2"/><path d="M93.2 381H110.9M102 372.4V390.9" stroke="#e8f3f8" stroke-width=".9"/><circle cx="42.3" cy="385.9" r="1.9" fill="#d9734d"/><circle cx="42.3" cy="385.9" r=".7" fill="#f3c3ae"/><circle cx="65" cy="381.8" r="1.9" fill="#d9734d"/><circle cx="65" cy="381.8" r=".7" fill="#f3c3ae"/><circle cx="91.5" cy="369.2" r="1.9" fill="#d9734d"/><circle cx="91.5" cy="369.2" r=".7" fill="#f3c3ae"/><circle cx="56.8" cy="402" r="1.9" fill="#d9734d"/><circle cx="56.8" cy="402" r=".7" fill="#f3c3ae"/><circle cx="89.2" cy="403.8" r="1.9" fill="#d9734d"/><circle cx="89.2" cy="403.8" r=".7" fill="#f3c3ae"/><rect x="49.5" y="398.8" width="5" height="8.8" rx=".8" fill="#8a6a55"/><rect x="49.5" y="401.5" width="5" height="3" fill="#c9b5a3"/><rect x="49" y="398.3" width="6" height="1.4" fill="#6d5242"/><rect x="95" y="406.3" width="6" height="1.6" rx=".5" fill="#eef0f2"/><path d="M74.8 443V469" stroke="#6b6f75" stroke-width=".9"/><path d="M72.2 467.5H77.4L74.8 471.5Z" fill="#6b6f75"/><rect x="33" y="482.5" width="83" height="60" fill="#f5f8fa" stroke="#dfe2e5"/><rect x="35" y="531" width="79.5" height="3.3" fill="#c68c5c"/><ellipse cx="76.7" cy="494.40000000000003" rx="3.4" ry="3" fill="#6b4433"/><path d="M78.0 493.6C82.5 494.6 81.0 501.1 84.5 499.6C85.0 504.1 80.5 505.1 79.5 501.6Z" fill="#6b4433"/><path d="M65.0 523.3C65.0 511.6 68.0 509.90000000000003 74.5 509.90000000000003C81.0 509.90000000000003 84.0 511.6 84.0 523.3Z" fill="#fbb584"/><path d="M68.7 510.20000000000005L71.5 510.0C72.0 513.6 77.0 513.6 77.5 510.0L80.3 510.20000000000005V519.3H68.7Z" fill="#e8653f"/><rect x="72.8" y="506.1" width="3.4" height="5.5" fill="#fbb584"/><ellipse cx="74.5" cy="502.90000000000003" rx="4.3" ry="5.3" fill="#fbb584"/><path d="M69.5 503.1C68.7 495.1 80.3 495.1 79.5 503.1L77.3 499.8L72.0 501.8L70.5 503.6Z" fill="#6b4433"/><rect x="68.5" y="501.6" width="1.7" height="4" rx=".8" fill="#3a3a3f"/><path d="M69.3 505.6L70.0 507.6L73.0 508.40000000000003" fill="none" stroke="#3a3a3f" stroke-width=".6"/><path d="M62.2 517.3H86.8L85.5 531H63.5Z" fill="#0d1230"/><path d="M62.2 517.3H86.8C83.5 523.3 74.5 526.3 63.0 526.8Z" fill="#161c40"/><rect x="62.0" y="530" width="25" height="1.3" fill="#0d1230"/></svg>
<div class="t " style="left:30px;top:305.2px;font-size:8.5px;color:#6b7179;">1.1 Animated Title Sli...</div>
<div class="t " style="left:29.5px;top:428.4px;font-size:8.5px;color:#6b7179;">1.2 Animated Marker...</div>
<div class="t " style="left:29.5px;top:551.6px;font-size:8.5px;color:#6b7179;">1.3 Animated GIF</div>
<div class="a" id="timeline"></div>
<div class="t " style="left:171px;top:514.8px;font-size:11.4px;color:#2d7cc4;letter-spacing:.5px">Timeline</div>
<div class="t " style="left:236.5px;top:515.0px;font-size:11px;color:#666b72;">States</div>
<div class="t " style="left:288px;top:514.8px;font-size:11.4px;color:#666b72;letter-spacing:.1px">Notes</div>
<div class="a" style="left:151px;top:534.5px;width:848px;height:22px;background:#f1f4f9;border-top:1px solid #e6e8ec;border-bottom:1px solid #e6e8ec"></div>
<div class="a" style="left:172px;top:539px;width:14px;height:14px;background:#fdfdfd;border:1px solid #d3d6da"></div>
<svg class="a" style="left:174.5px;top:542.5px" width="9" height="7" viewBox="0 0 9 7"><ellipse cx="4.5" cy="3.5" rx="4.3" ry="3" fill="#5b6068"/><circle cx="4.5" cy="3.5" r="1.5" fill="#fdfdfd"/><circle cx="4.5" cy="3.5" r=".7" fill="#5b6068"/></svg>
<div class="a" style="left:199px;top:539px;width:14px;height:14px;background:#fdfdfd;border:1px solid #d3d6da"></div>
<svg class="a" style="left:202.5px;top:541.5px" width="7" height="9" viewBox="0 0 7 9"><rect x="0" y="3.5" width="7" height="5" fill="#5b6068"/><path d="M1.5 4V2.5C1.5 .5 5.5 .5 5.5 2.5V4" fill="none" stroke="#5b6068" stroke-width="1.1"/></svg>
<div class="t " style="left:318.55px;top:541.8px;font-size:7.5px;color:#737880;">1s</div>
<div class="t " style="left:355.8px;top:541.8px;font-size:7.5px;color:#737880;">2s</div>
<div class="t " style="left:393.05px;top:541.8px;font-size:7.5px;color:#737880;">3s</div>
<div class="t " style="left:430.3px;top:541.8px;font-size:7.5px;color:#737880;">4s</div>
<div class="t " style="left:467.55px;top:541.8px;font-size:7.5px;color:#737880;">5s</div>
<div class="t " style="left:504.8px;top:541.8px;font-size:7.5px;color:#737880;">6s</div>
<div class="t " style="left:542.05px;top:541.8px;font-size:7.5px;color:#737880;">7s</div>
<div class="t " style="left:579.3px;top:541.8px;font-size:7.5px;color:#737880;">8s</div>
<div class="t " style="left:616.55px;top:541.8px;font-size:7.5px;color:#737880;">9s</div>
<div class="t " style="left:651.5px;top:541.8px;font-size:7.5px;color:#737880;">10s</div>
<svg class="a" style="left:286px;top:551px" width="380" height="5" viewBox="0 0 380 5"><rect x="0.50" y="0" width=".8" height="5" fill="#b3b8be"/><rect x="7.95" y="2.4" width=".8" height="2.6" fill="#b3b8be"/><rect x="15.40" y="2.4" width=".8" height="2.6" fill="#b3b8be"/><rect x="22.85" y="2.4" width=".8" height="2.6" fill="#b3b8be"/><rect x="30.30" y="2.4" width=".8" height="2.6" fill="#b3b8be"/><rect x="37.75" y="0" width=".8" height="5" fill="#b3b8be"/><rect x="45.20" y="2.4" width=".8" height="2.6" fill="#b3b8be"/><rect x="52.65" y="2.4" width=".8" height="2.6" fill="#b3b8be"/><rect x="60.10" y="2.4" width=".8" height="2.6" fill="#b3b8be"/><rect x="67.55" y="2.4" width=".8" height="2.6" fill="#b3b8be"/><rect x="75.00" y="0" width=".8" height="5" fill="#b3b8be"/><rect x="82.45" y="2.4" width=".8" height="2.6" fill="#b3b8be"/><rect x="89.90" y="2.4" width=".8" height="2.6" fill="#b3b8be"/><rect x="97.35" y="2.4" width=".8" height="2.6" fill="#b3b8be"/><rect x="104.80" y="2.4" width=".8" height="2.6" fill="#b3b8be"/><rect x="112.25" y="0" width=".8" height="5" fill="#b3b8be"/><rect x="119.70" y="2.4" width=".8" height="2.6" fill="#b3b8be"/><rect x="127.15" y="2.4" width=".8" height="2.6" fill="#b3b8be"/><rect x="134.60" y="2.4" width=".8" height="2.6" fill="#b3b8be"/><rect x="142.05" y="2.4" width=".8" height="2.6" fill="#b3b8be"/><rect x="149.50" y="0" width=".8" height="5" fill="#b3b8be"/><rect x="156.95" y="2.4" width=".8" height="2.6" fill="#b3b8be"/><rect x="164.40" y="2.4" width=".8" height="2.6" fill="#b3b8be"/><rect x="171.85" y="2.4" width=".8" height="2.6" fill="#b3b8be"/><rect x="179.30" y="2.4" width=".8" height="2.6" fill="#b3b8be"/><rect x="186.75" y="0" width=".8" height="5" fill="#b3b8be"/><rect x="194.20" y="2.4" width=".8" height="2.6" fill="#b3b8be"/><rect x="201.65" y="2.4" width=".8" height="2.6" fill="#b3b8be"/><rect x="209.10" y="2.4" width=".8" height="2.6" fill="#b3b8be"/><rect x="216.55" y="2.4" width=".8" height="2.6" fill="#b3b8be"/><rect x="224.00" y="0" width=".8" height="5" fill="#b3b8be"/><rect x="231.45" y="2.4" width=".8" height="2.6" fill="#b3b8be"/><rect x="238.90" y="2.4" width=".8" height="2.6" fill="#b3b8be"/><rect x="246.35" y="2.4" width=".8" height="2.6" fill="#b3b8be"/><rect x="253.80" y="2.4" width=".8" height="2.6" fill="#b3b8be"/><rect x="261.25" y="0" width=".8" height="5" fill="#b3b8be"/><rect x="268.70" y="2.4" width=".8" height="2.6" fill="#b3b8be"/><rect x="276.15" y="2.4" width=".8" height="2.6" fill="#b3b8be"/><rect x="283.60" y="2.4" width=".8" height="2.6" fill="#b3b8be"/><rect x="291.05" y="2.4" width=".8" height="2.6" fill="#b3b8be"/><rect x="298.50" y="0" width=".8" height="5" fill="#b3b8be"/><rect x="305.95" y="2.4" width=".8" height="2.6" fill="#b3b8be"/><rect x="313.40" y="2.4" width=".8" height="2.6" fill="#b3b8be"/><rect x="320.85" y="2.4" width=".8" height="2.6" fill="#b3b8be"/><rect x="328.30" y="2.4" width=".8" height="2.6" fill="#b3b8be"/><rect x="335.75" y="0" width=".8" height="5" fill="#b3b8be"/><rect x="343.20" y="2.4" width=".8" height="2.6" fill="#b3b8be"/><rect x="350.65" y="2.4" width=".8" height="2.6" fill="#b3b8be"/><rect x="358.10" y="2.4" width=".8" height="2.6" fill="#b3b8be"/><rect x="365.55" y="2.4" width=".8" height="2.6" fill="#b3b8be"/><rect x="373.00" y="0" width=".8" height="5" fill="#b3b8be"/></svg>
<div class="a" style="left:151px;top:556.5px;width:848px;height:23.5px;background:#fdfdfd;border-bottom:1px solid #e6e8ec"></div>
<div class="a" style="left:172px;top:561px;width:14px;height:14px;background:#fdfdfd;border:1px solid #d3d6da"></div>
<svg class="a" style="left:174.5px;top:564.5px" width="9" height="7" viewBox="0 0 9 7"><ellipse cx="4.5" cy="3.5" rx="4.3" ry="3" fill="#5b6068"/><circle cx="4.5" cy="3.5" r="1.5" fill="#fdfdfd"/><circle cx="4.5" cy="3.5" r=".7" fill="#5b6068"/></svg>
<div class="a" style="left:198.5px;top:561px;width:14px;height:14px;background:#fdfdfd;border:1px solid #d3d6da"></div>
<div class="t " style="left:230.5px;top:564.6px;font-size:8.2px;color:#5b6068;">Title</div>
<div class="a" style="left:172px;top:584px;width:14px;height:14px;background:#fdfdfd;border:1px solid #d3d6da"></div>
<div class="a" style="left:198.5px;top:584px;width:14px;height:14px;background:#fdfdfd;border:1px solid #d3d6da"></div>
<div class="a" style="left:286px;top:535px;width:1px;height:68px;background:#dfe2e6;"></div>
<div class="a" style="left:288px;top:559px;width:184.5px;height:19px;background:#e8ecf3;border:1px solid #d3d9e4"></div>
<svg class="a" style="left:292.5px;top:563.5px" width="12" height="9" viewBox="0 0 12 9"><rect x=".5" y=".5" width="11" height="8" fill="#f3f5f8" stroke="#8a8f96" stroke-width=".8"/><text x="1.8" y="6.8" font-size="5.5" fill="#6b7179" font-family="Liberation Sans">A</text><path d="M6.5 3H10M6.5 5H10" stroke="#8a8f96" stroke-width=".7"/></svg>
<div class="t " style="left:313.5px;top:564.2px;font-size:9.2px;color:#5b6068;">Work From Home Tips</div>
<svg class="a" style="left:464.5px;top:566px" width="4" height="5" viewBox="0 0 4 5"><path d="M0 0V5L4 2.5Z" fill="#6b7179"/></svg>
<div class="t " style="left:478px;top:560.0px;font-size:7.5px;color:#c3c7cc;">End</div>
<div class="a" style="left:472px;top:553px;width:1px;height:32px;background:#d3d6da;"></div>
<div class="a" style="left:288px;top:581.5px;width:184.5px;height:4px;background:#e8ecf3;border-top:1px solid #d3d9e4"></div>
<svg class="a" style="left:282.5px;top:549.5px" width="9" height="6" viewBox="0 0 9 6"><path d="M0 0H9L4.5 6Z" fill="#1b7cd6"/></svg>
<svg class="a" style="left:286.5px;top:555px" width="1" height="30" viewBox="0 0 1 30"><path d="M.5 0V30" stroke="#6ba5dc" stroke-width=".8" stroke-dasharray="2 1.5"/></svg>
<div class="a" style="left:151px;top:586px;width:617px;height:16px;background:#eceef2;border-top:1px solid #e3e6ea"></div>
<svg class="a" style="left:158px;top:590px" width="5" height="8" viewBox="0 0 5 8"><path d="M0 0V8L5 4Z" fill="#5b6068"/></svg>
<div class="a" style="left:175.5px;top:590.5px;width:7px;height:7px;background:#7d838b;"></div>
<svg class="a" style="left:207px;top:592.5px" width="8" height="5" viewBox="0 0 8 5"><path d="M0 5H8L4 0Z" fill="#7d838b"/></svg>
<svg class="a" style="left:224px;top:591.5px" width="22" height="6" viewBox="0 0 22 6"><path d="M0 3H22" stroke="#7d838b" stroke-width="1"/><circle cx="7" cy="3" r="2.3" fill="#fdfdfd" stroke="#5b6068" stroke-width="1"/></svg>
<svg class="a" style="left:254.5px;top:590.5px" width="20" height="7" viewBox="0 0 20 7"><path d="M0 7H7L3.5 3Z M6 7H20L13 0Z" fill="#7d838b"/></svg>
<div class="a" style="left:286.5px;top:586px;width:481.5px;height:16px;background:#e5e8ec;"></div>
<svg class="a" style="left:291.5px;top:592px" width="3" height="5" viewBox="0 0 3 5"><path d="M3 0V5L0 2.5Z" fill="#b3b8be"/></svg>
<svg class="a" style="left:757.5px;top:591.5px" width="4" height="5" viewBox="0 0 4 5"><path d="M0 0V5L4 2.5Z" fill="#b3b8be"/></svg>
<div class="a" style="left:767px;top:580px;width:16px;height:10px;background:#fdfdfd;border:1px solid #e6e8ec"></div>
<div class="a" style="left:783px;top:504px;width:1px;height:99px;background:#e6e8ec;"></div>
<div class="a" style="left:784px;top:580px;width:215px;height:22px;background:#f6f7f9;"></div>
<div class="a" style="left:800.5px;top:574px;width:20.5px;height:20px;background:#fdfdfd;border:1px solid #d3d6da"></div>
<div class="a" style="left:824.3px;top:574px;width:20.5px;height:20px;background:#fdfdfd;border:1px solid #d3d6da"></div>
<div class="a" style="left:848px;top:574px;width:20.5px;height:20px;background:#f3f4f6;border:1px solid #d3d6da"></div>
<svg class="a" style="left:806px;top:578.5px" width="10" height="12" viewBox="0 0 10 12"><path d="M.5 .5H6L9.5 4V11.5H.5Z" fill="#fff" stroke="#4a4f56"/></svg>
<svg class="a" style="left:829px;top:578px" width="12" height="12" viewBox="0 0 12 12"><rect x="1.5" y="1.5" width="9" height="9" fill="none" stroke="#6b7179"/><rect x="3.5" y="4" width="5" height="4.5" fill="#6b9a58"/><path d="M5 7L10.5 1L11.5 2L6 8Z" fill="#8a8f96"/></svg>
<svg class="a" style="left:853px;top:578px" width="10" height="12" viewBox="0 0 10 12"><path d="M.5 2.5H9.5M3.5 2.5V1H6.5V2.5M1.8 3L2.5 11.5H7.5L8.2 3" fill="none" stroke="#c5c9cf"/></svg>
<div class="a" style="left:877px;top:577.5px;width:14px;height:14px;background:#fdfdfd;border:1px solid #d3d6da"></div>
<svg class="a" style="left:879px;top:579.5px" width="10" height="8" viewBox="0 0 10 8"><path d="M1 4L4 7L9 1" fill="none" stroke="#2470c0" stroke-width="1.5"/></svg>
<div class="t " style="left:896.5px;top:580.3px;font-size:10px;color:#6b7179;">Dim</div>
<svg class="a" style="left:768px;top:586.7px" width="9" height="14" viewBox="0 0 9 14"><path d="M.7 .7V11L3.2 8.6L5 12.8L6.8 12L5 8H8.3Z" fill="#fff" stroke="#222" stroke-width=".9" stroke-linejoin="round"/></svg>
<div class="a" id="rightstrip"></div>
<svg class="a" style="left:980px;top:51px" width="12" height="16" viewBox="0 0 12 16"><circle cx="1" cy="8.5" r="6" fill="none" stroke="#5b6068" stroke-width="1.1"/><path d="M-1 1.5H4" stroke="#5b6068" stroke-width="1.3"/></svg>
<div class="t " style="left:980.5px;top:76.7px;font-size:8.7px;color:#4a4f56;">sh</div>
<div class="a" style="left:992.5px;top:47px;width:1px;height:62px;background:#e4e6ea;"></div>
<div class="a" style="left:979px;top:115px;width:20px;height:20px;background:#f3f6fb;"></div>
<svg class="a" style="left:980px;top:142px" width="12" height="12" viewBox="0 0 12 12"><g transform="translate(6 6)"><rect x="-1.1" y="-5.8" width="2.2" height="3" fill="#3c4046" transform="rotate(0)"/><rect x="-1.1" y="-5.8" width="2.2" height="3" fill="#3c4046" transform="rotate(45)"/><rect x="-1.1" y="-5.8" width="2.2" height="3" fill="#3c4046" transform="rotate(90)"/><rect x="-1.1" y="-5.8" width="2.2" height="3" fill="#3c4046" transform="rotate(135)"/><rect x="-1.1" y="-5.8" width="2.2" height="3" fill="#3c4046" transform="rotate(180)"/><rect x="-1.1" y="-5.8" width="2.2" height="3" fill="#3c4046" transform="rotate(225)"/><rect x="-1.1" y="-5.8" width="2.2" height="3" fill="#3c4046" transform="rotate(270)"/><rect x="-1.1" y="-5.8" width="2.2" height="3" fill="#3c4046" transform="rotate(315)"/><circle r="3.9" fill="#3c4046"/><circle r="1.9" fill="#fdfdfd"/></g></svg>
<div class="a" style="left:980px;top:163px;width:19px;height:1.5px;background:#1b7cd6;"></div>
<div class="a" style="left:980px;top:164.5px;width:17px;height:32px;background:#eef1f6;border-right:1px solid #e3e6ea;border-bottom:1px solid #e3e6ea"></div>
<div class="a" style="left:980px;top:197px;width:19px;height:307px;background:#fdfdfd;"></div>
<div class="a" style="left:980px;top:537px;width:15px;height:25px;background:#167bd8;"></div>
<svg class="a" style="left:981px;top:546px" width="4" height="6" viewBox="0 0 4 6"><path d="M0 0V6L4 3Z" fill="#fff"/></svg>
<div class="a" style="left:980px;top:562px;width:19px;height:40px;background:#f6f7f9;"></div>
<div class="a" style="left:969px;top:572.5px;width:21px;height:21px;background:#fdfdfd;border:1px solid #d9dce0"></div>
<svg class="a" style="left:973.5px;top:577px" width="12" height="12" viewBox="0 0 12 12"><g transform="translate(6 6)"><rect x="-1" y="-5.5" width="2" height="3" fill="#b3b8be" transform="rotate(0)"/><rect x="-1" y="-5.5" width="2" height="3" fill="#b3b8be" transform="rotate(45)"/><rect x="-1" y="-5.5" width="2" height="3" fill="#b3b8be" transform="rotate(90)"/><rect x="-1" y="-5.5" width="2" height="3" fill="#b3b8be" transform="rotate(135)"/><rect x="-1" y="-5.5" width="2" height="3" fill="#b3b8be" transform="rotate(180)"/><rect x="-1" y="-5.5" width="2" height="3" fill="#b3b8be" transform="rotate(225)"/><rect x="-1" y="-5.5" width="2" height="3" fill="#b3b8be" transform="rotate(270)"/><rect x="-1" y="-5.5" width="2" height="3" fill="#b3b8be" transform="rotate(315)"/><circle r="3.6" fill="#b3b8be"/><circle r="1.9" fill="#fdfdfd"/></g></svg>
<div class="a" id="status"></div>
<div class="t " style="left:8px;top:612.1px;font-size:8.8px;color:#c9c9cc;">Slide 1 of 3</div>
<div class="t " style="left:65px;top:612.1px;font-size:8.8px;color:#c9c9cc;">'Clean'</div>
<svg class="a" style="left:785px;top:609.5px" width="10" height="9" viewBox="0 0 10 9"><rect x="0" y="0" width="4.4" height="3.8" fill="#c9c9cc"/><rect x="5.6" y="0" width="4.4" height="3.8" fill="#c9c9cc"/><rect x="0" y="5.2" width="4.4" height="3.8" fill="#c9c9cc"/><rect x="5.6" y="5.2" width="4.4" height="3.8" fill="#c9c9cc"/></svg>
<div class="a" style="left:799.5px;top:603px;width:19px;height:24px;background:#2e2c31;"></div>
<svg class="a" style="left:804px;top:609.5px" width="10" height="9" viewBox="0 0 10 9"><rect x=".5" y=".5" width="9" height="8" fill="none" stroke="#c9c9cc"/><rect x="3" y="1" width="6" height="5" fill="#c9c9cc"/><path d="M1.5 2H2.5M1.5 4H2.5M1.5 6H2.5" stroke="#c9c9cc" stroke-width=".8"/></svg>
<svg class="a" style="left:822.5px;top:609px" width="11" height="10" viewBox="0 0 11 10"><rect x=".5" y=".5" width="10" height="5" fill="none" stroke="#c9c9cc"/><path d="M2.5 2.5H8.5" stroke="#c9c9cc"/><path d="M5.5 6V8.5M3 9.3H8" stroke="#c9c9cc" stroke-width="1.1"/></svg>
<div class="t " style="left:840px;top:612.2px;font-size:8.2px;color:#c9c9cc;">100%</div>
<div class="a" style="left:869.5px;top:614px;width:5px;height:1.4px;background:#c9c9cc;"></div>
<div class="a" style="left:878.5px;top:614px;width:78px;height:1.2px;background:#c9c9cc;"></div>
<svg class="a" style="left:914.5px;top:611px" width="7" height="7" viewBox="0 0 7 7"><circle cx="3.5" cy="3.5" r="2.5" fill="#363439" stroke="#e3e3e6" stroke-width="1.3"/></svg>
<svg class="a" style="left:960px;top:611.5px" width="6" height="6" viewBox="0 0 6 6"><path d="M0 3H6M3 0V6" stroke="#c9c9cc" stroke-width="1.3"/></svg>
<svg class="a" style="left:972px;top:608.5px" width="11" height="11" viewBox="0 0 11 11"><rect x=".5" y=".5" width="10" height="10" fill="none" stroke="#c9c9cc"/><path d="M2 2L4.5 4.5M9 2L6.5 4.5M2 9L4.5 6.5M9 9L6.5 6.5" stroke="#c9c9cc" stroke-width="1.1"/><path d="M2 2H4V2.8H2.8V4H2Z M9 2H7V2.8H8.2V4H9Z M2 9H4V8.2H2.8V7H2Z M9 9H7V8.2H8.2V7H9Z" fill="#c9c9cc"/></svg>
<div class="a" id="trig">
<div class="a" style="left:0px;top:0px;width:313px;height:64.5px;background:#f4f6f9;"></div>
<div class="t " style="left:15px;top:9.1px;font-size:12px;color:#6b7179">Triggers</div>
<svg class="a" style="left:287px;top:8px" width="12" height="11" viewBox="0 0 12 11"><rect x="2.5" y="0.5" width="8" height="6" fill="none" stroke="#cfd2d7"/><rect x="0.5" y="3.5" width="8" height="6" fill="#f4f6f9" stroke="#cfd2d7"/><rect x="0.5" y="3.5" width="8" height="1.5" fill="#cfd2d7"/></svg>
<div class="a tb" style="left:14px;top:33px;background:#fefefd"></div>
<div class="a tb" style="left:37.3px;top:33px;background:#f6f7f9"></div>
<div class="a tb" style="left:60.5px;top:33px;background:#f6f7f9"></div>
<div class="a tb" style="left:83.7px;top:33px;background:#f6f7f9"></div>
<div class="a tb" style="left:107px;top:33px;background:#f6f7f9"></div>
<div class="a tb" style="left:130.3px;top:33px;background:#f6f7f9"></div>
<div class="a tb" style="left:278.5px;top:33px;background:#fefefd"></div>
<svg class="a" style="left:18.5px;top:37.5px" width="12" height="13" viewBox="0 0 12 13"><path d="M1.5 .5H7.5L10.5 3.5V12.5H1.5Z" fill="#fff" stroke="#5a6068"/><path d="M7.5 .5V3.5H10.5" fill="none" stroke="#5a6068"/></svg>
<svg class="a" style="left:41.5px;top:37.5px" width="13" height="13" viewBox="0 0 13 13"><rect x="1.5" y="2.5" width="8" height="9" fill="none" stroke="#b4b8be"/><path d="M4 9L10 2.5L11.5 4L5.5 10Z" fill="#d3d6da"/></svg>
<svg class="a" style="left:65px;top:37.5px" width="13" height="13" viewBox="0 0 13 13"><path d="M1.5 1.5H6.5V3.5H9L11.5 6V11.5H4.5V9.5H1.5Z" fill="none" stroke="#b4b8be"/><path d="M4.5 9.5V3.5H6.5" fill="none" stroke="#b4b8be"/></svg>
<svg class="a" style="left:88px;top:37.5px" width="13" height="13" viewBox="0 0 13 13"><path d="M1.5 2.5H8.5V5M1.5 2.5V10.5H5" fill="none" stroke="#b4b8be"/><rect x="3.5" y="1" width="3" height="2.2" fill="#b4b8be"/><path d="M5.5 5.5H9.5L11.5 7.5V12H5.5Z" fill="none" stroke="#b4b8be"/></svg>
<svg class="a" style="left:111.5px;top:37.5px" width="12" height="13" viewBox="0 0 12 13"><path d="M1 2.5H11M4.5 2.5V1H7.5V2.5M2.5 3L3.2 12H8.8L9.5 3" fill="none" stroke="#b4b8be"/><path d="M4.8 5V10M7.2 5V10" stroke="#d3d6da"/></svg>
<div class="a" style="left:131.3px;top:43px;width:19px;height:1px;background:#d8dbdf;"></div>
<svg class="a" style="left:136.8px;top:36.5px" width="8" height="15" viewBox="0 0 8 15"><path d="M4 1L7 4.5H1Z M4 14L7 10.5H1Z" fill="#b4b8be"/></svg>
<div class="a" style="left:222px;top:37.5px;width:14px;height:14px;background:#fff;border:1px solid #c9cdd2"></div>
<div class="t " style="left:242.5px;top:40.1px;font-size:10px;color:#6b7179">Group</div>
<svg class="a" style="left:283.5px;top:38px" width="12" height="12" viewBox="0 0 12 12"><rect x=".5" y=".5" width="11" height="11" fill="#eef0f4" stroke="#8a9199"/><rect x=".5" y=".5" width="11" height="2.2" fill="#747b84"/><text x="6" y="9.6" font-size="6" font-family="Liberation Sans" fill="#5f8bb5" text-anchor="middle">[x]</text></svg>
<div class="hdr" style="top:64.5px"></div>
<div class="t " style="left:7px;top:71.8px;font-size:10.7px;color:#4b5159;-webkit-text-stroke:.25px #4b5159">Slide Triggers</div>
<svg class="a" style="left:294px;top:71px" width="9" height="11" viewBox="0 0 9 11"><path d="M1 .5H8M1 10.5H8" stroke="#cfd2d7"/><path d="M4.5 4.6L1.8 1.6H7.2Z M4.5 6.4L1.8 9.4H7.2Z" fill="#cfd2d7"/></svg>
<svg class="a" style="left:7px;top:96.5px" width="7" height="5" viewBox="0 0 7 5"><path d="M0 .5H7L3.5 4.5Z" fill="#b9bdc3"/></svg>
<div class="t bd" style="left:28px;top:94.6px;font-size:9.3px;letter-spacing:-0.088px;font-weight:700;">Slide - 1.1 Animated Title Slide</div>
<div class="hl" style="top:108px"></div>
<div class="t tx" style="left:28px;top:116.6px;font-size:9.3px;letter-spacing:0.024px;">Show layer <span class="lk">Morning routine</span></div>
<div class="t tx" style="left:40px;top:131.9px;font-size:9.2px;letter-spacing:0.015px;">When the timeline starts on <span class="lk">this slide</span></div>
<div class="hl" style="top:147px"></div>
<div class="t tx" style="left:28px;top:155.2px;font-size:9.3px;letter-spacing:-0.181px;">Show layer <span class="lk">Workspace</span></div>
<div class="t tx" style="left:40px;top:170.9px;font-size:9.2px;letter-spacing:0.015px;">When the timeline starts on <span class="lk">this slide</span></div>
<div class="hdr" style="top:186px"></div>
<div class="t " style="left:7px;top:193.2px;font-size:10.7px;color:#4b5159;-webkit-text-stroke:.25px #4b5159">Object Triggers</div>
<svg class="a" style="left:294px;top:192.5px" width="9" height="11" viewBox="0 0 9 11"><path d="M1 .5H8M1 10.5H8" stroke="#cfd2d7"/><path d="M4.5 4.6L1.8 1.6H7.2Z M4.5 6.4L1.8 9.4H7.2Z" fill="#cfd2d7"/></svg>
<svg class="a" style="left:7px;top:218px" width="7" height="5" viewBox="0 0 7 5"><path d="M0 .5H7L3.5 4.5Z" fill="#b9bdc3"/></svg>
<div class="t bd" style="left:28px;top:215.8px;font-size:9.4px;">Start button</div>
<div class="hl" style="top:230px"></div>
<div class="t tx" style="left:28px;top:238.9px;font-size:9.2px;letter-spacing:0.004px;">Jump to slide <span class="lk">next slide</span></div>
<div class="t tx" style="left:40px;top:254.1px;font-size:9.2px;letter-spacing:-0.004px;">When the user clicks <span class="lk">Start button</span></div>
<div class="hdr" style="top:268.5px"></div>
<div class="t " style="left:7px;top:276.1px;font-size:10.4px;color:#4b5159;-webkit-text-stroke:.25px #4b5159">Player Triggers</div>
<svg class="a" style="left:294px;top:275px" width="9" height="11" viewBox="0 0 9 11"><path d="M1 .5H8M1 10.5H8" stroke="#cfd2d7"/><path d="M4.5 4.6L1.8 1.6H7.2Z M4.5 6.4L1.8 9.4H7.2Z" fill="#cfd2d7"/></svg>
<svg class="a" style="left:7px;top:301px" width="7" height="5" viewBox="0 0 7 5"><path d="M0 .5H7L3.5 4.5Z" fill="#b9bdc3"/></svg>
<div class="t bd" style="left:28px;top:299.1px;font-size:9.5px;">Next Button / Swipe Next</div>
<div class="hl" style="top:312.5px"></div>
<div class="t tx" style="left:28px;top:321.7px;font-size:9.2px;letter-spacing:0.004px;">Jump to slide <span class="lk">next slide</span></div>
<div class="t tx" style="left:40px;top:336.6px;font-size:9.2px;letter-spacing:-0.058px;">When the user clicks or swipes <span class="lk">next</span></div>
<div class="hl" style="top:352px"></div>
</div>
</body></html>
